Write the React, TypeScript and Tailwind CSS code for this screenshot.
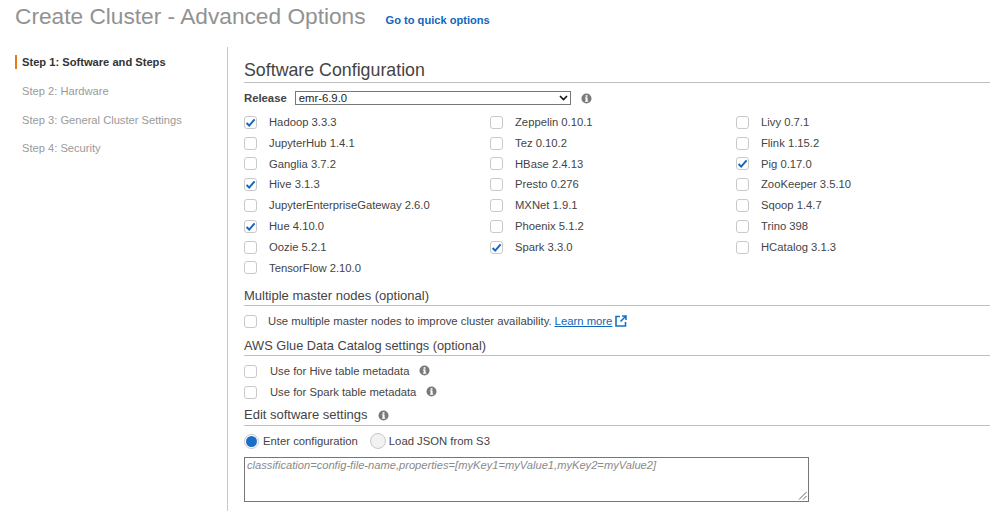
import React from "react";

const Info = ({ className = "" }: { className?: string }) => (
  <svg width="11" height="11" viewBox="0 0 11 11" className={className}>
    <circle cx="5.5" cy="5.5" r="5" fill="#7a7a7a" />
    <rect x="4.6" y="4.6" width="2" height="3.6" fill="#fff" />
    <rect x="3.9" y="4.4" width="2.2" height="0.9" fill="#fff" />
    <rect x="3.9" y="7.8" width="3.4" height="0.9" fill="#fff" />
    <rect x="4.6" y="2.2" width="1.9" height="1.6" fill="#fff" />
  </svg>
);

const Check = ({ on = false, className = "" }: { on?: boolean; className?: string }) => (
  <span className={`flex h-[13px] w-[13px] shrink-0 items-center justify-center rounded-[3px] border border-[#c9c9c9] bg-white ${className}`}>
    {on && (
      <svg width="11" height="11" viewBox="0 0 11 11">
        <path d="M1.6 6 L4.2 8.6 L9.6 2.4" fill="none" stroke="#1566c0" strokeWidth="2" />
      </svg>
    )}
  </span>
);

const Heading = ({ children, className = "" }: { children: React.ReactNode; className?: string }) => (
  <div className={`flex items-center border-b border-[#c0c0c0] leading-[20px] text-[#444] ${className}`}>{children}</div>
);

const Item = ({ label, on }: { label: string; on?: boolean }) => (
  <div className="flex h-[20.8px] items-center text-[11.25px] text-[#444]">
    <Check on={on} />
    <span className="ml-[12px]">{label}</span>
  </div>
);

const columns: [string, boolean?][][] = [
  [["Hadoop 3.3.3", true], ["JupyterHub 1.4.1"], ["Ganglia 3.7.2"], ["Hive 3.1.3", true], ["JupyterEnterpriseGateway 2.6.0"], ["Hue 4.10.0", true], ["Oozie 5.2.1"], ["TensorFlow 2.10.0"]],
  [["Zeppelin 0.10.1"], ["Tez 0.10.2"], ["HBase 2.4.13"], ["Presto 0.276"], ["MXNet 1.9.1"], ["Phoenix 5.1.2"], ["Spark 3.3.0", true]],
  [["Livy 0.7.1"], ["Flink 1.15.2"], ["Pig 0.17.0", true], ["ZooKeeper 3.5.10"], ["Sqoop 1.4.7"], ["Trino 398"], ["HCatalog 3.1.3"]],
];

export default function App() {
  return (
    <div className="h-[511px] w-[995px] overflow-hidden bg-white font-['Liberation_Sans',Arial,sans-serif]">
      <div className="flex h-[47px] pl-[15px]">
        <h1 className="text-[22.7px] leading-[32px] text-[#929292]">Create Cluster - Advanced Options</h1>
        <a className="ml-[20px] mt-[13px] text-[11.1px] font-bold leading-[15px] text-[#1166bb]">Go to quick options</a>
      </div>
      <div className="flex h-[464px]">
        <nav className="w-[228px] shrink-0 border-r border-[#c8c8c8] pl-[15px] pt-[8px] text-[11.15px]">
          <div className="flex h-[14px] items-center border-l-2 border-[#e07b1f] pl-[5px] font-bold text-[#333]">Step 1: Software and Steps</div>
          <div className="mt-[15px] flex h-[15px] items-center pl-[7px] text-[#9a9a9a]">Step 2: Hardware</div>
          <div className="mt-[14px] flex h-[15px] items-center pl-[7px] text-[#9a9a9a]">Step 3: General Cluster Settings</div>
          <div className="mt-[13px] flex h-[15px] items-center pl-[7px] text-[#9a9a9a]">Step 4: Security</div>
        </nav>
        <main className="ml-[16px] w-[746px]">
          <div className="mt-[11px] h-[25px] border-b border-[#c0c0c0] text-[17.8px] leading-[24px] text-[#444]">Software Configuration</div>
          <div className="mt-[7px] flex h-[16px] items-center">
            <span className="text-[11.3px] font-bold text-[#444]">Release</span>
            <div className="ml-[8px] flex h-[14px] w-[276px] items-center justify-between border border-[#767676] pl-[3px] pr-[2px] text-[11.3px] text-[#222]">
              <span>emr-6.9.0</span>
              <svg width="9" height="6" viewBox="0 0 9 6"><path d="M1 1 L4.5 4.5 L8 1" fill="none" stroke="#111" strokeWidth="1.6" /></svg>
            </div>
            <Info className="ml-[10px]" />
          </div>
          <div className="mt-[6px] grid h-[167px] grid-cols-[246px_246px_254px]">
            {columns.map((col, i) => (
              <div key={i}>
                {col.map(([label, on]) => <Item key={label} label={label} on={on} />)}
              </div>
            ))}
          </div>
          <Heading className="mt-[6px] h-[21px] pt-[1px] text-[13px]">Multiple master nodes (optional)</Heading>
          <div className="flex h-[30px] items-center text-[11.3px] text-[#444]">
            <Check />
            <span className="ml-[11px]">Use multiple master nodes to improve cluster availability.</span>
            <a className="ml-[3px] text-[#1166bb] underline">Learn more</a>
            <svg width="12" height="12" viewBox="0 0 12 12" className="ml-[3px]">
              <path d="M5 1.5 H1 V11 H10.5 V7" fill="none" stroke="#1a73c8" strokeWidth="1.6" />
              <path d="M7 1 H11 V5 M11 1 L5.5 6.5" fill="none" stroke="#1a73c8" strokeWidth="1.6" />
            </svg>
          </div>
          <Heading className="h-[20px] text-[12.8px]">AWS Glue Data Catalog settings (optional)</Heading>
          <div className="mt-[5px] flex h-[21px] items-center text-[11.25px] text-[#444]">
            <Check />
            <span className="ml-[13px]">Use for Hive table metadata</span>
            <Info className="ml-[10px] -mt-[2px]" />
          </div>
          <div className="flex h-[21px] items-center text-[11.25px] text-[#444]">
            <Check />
            <span className="ml-[13px]">Use for Spark table metadata</span>
            <Info className="ml-[10px] -mt-[2px]" />
          </div>
          <Heading className="mt-[1px] h-[22px] pt-[1px] text-[13px]">
            Edit software settings
            <Info className="ml-[10px] mt-[1px]" />
          </Heading>
          <div className="flex h-[30px] items-center text-[11.3px] text-[#444]">
            <span className="flex h-[15px] w-[15px] items-center justify-center rounded-full border border-[#c8c8c8] bg-white">
              <span className="h-[11px] w-[11px] rounded-full bg-[#1a6fc9]" />
            </span>
            <span className="ml-[4px]">Enter configuration</span>
            <span className="ml-[12px] h-[16px] w-[16px] rounded-full border border-[#c8c8c8] bg-[#f2f2f2]" />
            <span className="ml-[3px]">Load JSON from S3</span>
          </div>
          <div className="relative mt-[1px] h-[45px] w-[565px] border border-[#767676] px-[2px] text-[11.15px] italic leading-[15px] text-[#8a8a8a]">
            classification=config-file-name,properties=[myKey1=myValue1,myKey2=myValue2]
            <svg width="9" height="9" viewBox="0 0 9 9" className="absolute bottom-[1px] right-[1px]">
              <path d="M1 8.5 L8.5 1 M5 8.5 L8.5 5" stroke="#666" strokeWidth="1" />
            </svg>
          </div>
        </main>
      </div>
    </div>
  );
}
